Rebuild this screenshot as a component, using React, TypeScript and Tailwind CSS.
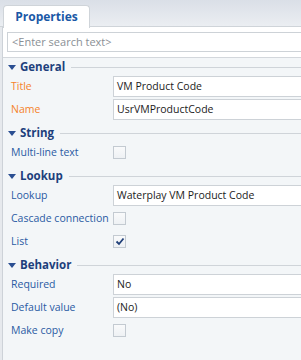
import React from 'react';

type Row =
  | { label: string; kind: 'input'; value: string; required?: boolean }
  | { label: string; kind: 'check'; checked?: boolean };

interface Section {
  title: string;
  rows: Row[];
}

const sections: Section[] = [
  {
    title: 'General',
    rows: [
      { label: 'Title', kind: 'input', value: 'VM Product Code', required: true },
      { label: 'Name', kind: 'input', value: 'UsrVMProductCode', required: true },
    ],
  },
  {
    title: 'String',
    rows: [{ label: 'Multi-line text', kind: 'check' }],
  },
  {
    title: 'Lookup',
    rows: [
      { label: 'Lookup', kind: 'input', value: 'Waterplay VM Product Code' },
      { label: 'Cascade connection', kind: 'check' },
      { label: 'List', kind: 'check', checked: true },
    ],
  },
  {
    title: 'Behavior',
    rows: [
      { label: 'Required', kind: 'input', value: 'No' },
      { label: 'Default value', kind: 'input', value: '(No)' },
      { label: 'Make copy', kind: 'check' },
    ],
  },
];

function Checkbox({ checked }: { checked?: boolean }) {
  return (
    <div className="w-[13px] h-[13px] border border-[#c3cad1] bg-linear-to-b from-[#f9fafb] to-[#eef1f4] flex items-center justify-center">
      {checked && (
        <svg width="10" height="9" viewBox="0 0 10 9" fill="none">
          <path d="M1.5 4.5 L4 7 L8.5 1.5" stroke="#1f3f78" strokeWidth="1.8" />
        </svg>
      )}
    </div>
  );
}

function PropertyRow({ row }: { row: Row }) {
  return (
    <div className="h-[23px] flex items-center">
      <div
        className={`w-[110px] shrink-0 pl-[8px] ${row.kind === 'input' && row.required ? 'text-[#f5832b]' : 'text-[#2a5aa3]'}`}
      >
        {row.label}
      </div>
      {row.kind === 'input' ? (
        <div className="flex-1 h-[21px] bg-white border border-r-0 border-[#cdd2d7] flex items-center pl-[3px] text-[#1b1b1b] whitespace-nowrap">
          {row.value}
        </div>
      ) : (
        <Checkbox checked={row.checked} />
      )}
    </div>
  );
}

export default function App() {
  return (
    <div className="w-[301px] h-[360px] overflow-hidden bg-[#e6e9ed] font-['Open_Sans',sans-serif] text-[10.5px]">
      {/* tab strip */}
      <div className="h-[27px] bg-linear-to-b from-[#dadfe7] to-[#ebeef2] border-b border-[#cfd4d9] pl-[3px] pt-[5px] flex">
        <div className="w-[87px] h-[23px] bg-white border border-b-0 border-[#cfd4d9] rounded-t-[4px] flex items-center justify-center text-[12px] font-bold text-[#1a58a6] relative z-10">
          Properties
        </div>
      </div>

      <div className="ml-[2px] border-l border-[#cdd2d8] h-full">
        {/* search */}
        <div className="bg-white pt-[5px] pb-[5px] pl-[4px] border-b border-[#d3d7dc]">
          <div className="h-[20px] border border-r-0 border-[#cdd2d7] flex items-center pl-[4px] text-[11px] text-[#8a8f95]">
            &lt;Enter search text&gt;
          </div>
        </div>

        <div className="bg-[#f3f6f8] h-full pt-[1px]">
          {sections.map((s, i) => (
            <div key={s.title} className={i === 0 ? '' : 'pt-[4px]'}>
              <div className="h-[16px] flex items-center pl-[5px]">
                <svg width="8" height="5" viewBox="0 0 8 5" className="shrink-0">
                  <path d="M0 0 H8 L4 5 Z" fill="#2b4f92" />
                </svg>
                <span className="ml-[4px] text-[11.5px] font-bold text-[#1d3f7c]">{s.title}</span>
                <div className="flex-1 ml-[6px] h-px bg-[#cfd4d9]" />
              </div>
              {s.rows.map((r) => (
                <PropertyRow key={r.label} row={r} />
              ))}
            </div>
          ))}
        </div>
      </div>
    </div>
  );
}
